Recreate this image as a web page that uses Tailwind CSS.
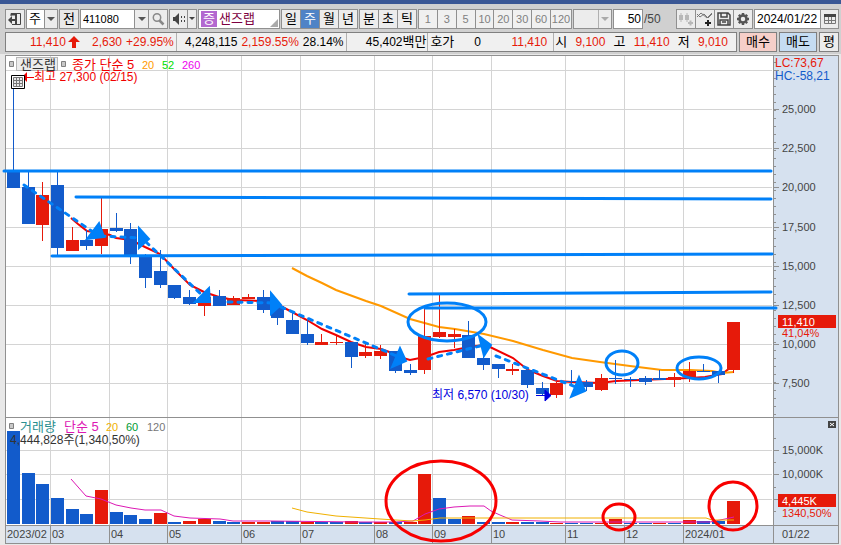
<!DOCTYPE html>
<html lang="ko">

<head>
    <meta charset="UTF-8">
    <meta name="viewport" content="width=device-width, initial-scale=1.0">
    <title>샌즈랩 주봉 차트</title>
    <script src="https://cdn.jsdelivr.net/npm/@tailwindcss/browser@4"></script>
</head>
<body class="bg-[#e8e8e8] text-black text-[13px] leading-4 font-['Liberation_Sans','Noto_Sans_CJK_KR',sans-serif]">

    <!-- Toolbar -->
    <header class="border-t-4 border-[#3a5795] bg-[#d0d0d0] pt-[5px] pb-0.5 pl-[5px] pr-0.5 whitespace-nowrap">
        <div class="flex h-5 gap-px">
            <button class="w-5 shrink-0 border border-[#909090] bg-[#ececec] flex items-center justify-center" aria-label="패널">
                <svg class="w-3.5 h-3.5" viewBox="0 0 14 14"><path d="M3 4V1.500h9.500v11H4" fill="none" stroke="#444" /><path d="M3 2.500h6M8 2v10" stroke="#444" stroke-width="2" /><path d="M0 8l4-4v8z" fill="#444" /><path d="M4 8h3" stroke="#444" stroke-width="2" /></svg>
            </button>
            <div class="flex w-8 shrink-0 border border-[#909090] bg-white">
                <select class="w-[17px] appearance-none pl-0.5" aria-label="구분"><option>주</option></select>
                <span class="flex-1 border-l border-[#909090] bg-[#ececec] flex items-center justify-center"><svg class="w-2 h-1.5" viewBox="0 0 8 6"><path d="M0 1h8L4 5z" fill="#555" /></svg></span>
            </div>
            <button class="w-5 shrink-0 border border-[#909090] bg-[#e8e8e8]">전</button>
            <div class="flex w-[88px] shrink-0 border border-[#909090] bg-white">
                <input class="w-[53px] pl-0.5 text-[11px]" value="411080" aria-label="종목코드">
                <button class="w-3.5 border-l border-[#909090] bg-[#ececec] flex items-center justify-center" aria-label="종목 목록"><svg class="w-2 h-1.5" viewBox="0 0 8 6"><path d="M0 1h8L4 5z" fill="#555" /></svg></button>
                <button class="flex-1 border-l border-[#909090] bg-[#ececec] flex items-center justify-center" aria-label="검색"><svg class="w-3.5 h-3.5" viewBox="0 0 14 14" fill="none" stroke="#888"><circle cx="6" cy="5.5" r="3.7" stroke-width="1.5" /><path d="M8.500 8.500l4 4" stroke-width="2.500" /></svg></button>
            </div>
            <div class="flex w-7 shrink-0 border border-[#909090] bg-[#ececec]">
                <button class="w-[17px] flex items-center justify-center" aria-label="음성"><svg class="w-3.5 h-3.5" viewBox="0 0 14 14" fill="#444"><path d="M1 5h2l4-4v12l-4-4H1z" /><path d="M9 4h1v2H9zM12 4h1v2h-1zM9 8h1v2H9zM12 8h1v2h-1z" /></svg></button>
                <button class="flex-1 border-l border-[#909090] flex items-center justify-center" aria-label="음성 메뉴"><svg class="w-1.5 h-1" viewBox="0 0 6 4"><path d="M0 0h6L3 3z" fill="#444" /></svg></button>
            </div>
            <div class="relative flex items-center w-[82px] shrink-0 border border-[#909090] bg-white pl-0.5 gap-0.5">
                <span class="bg-[#b368d0] text-white w-4 h-4 flex items-center justify-center">증</span>
                <span class="text-[#7d0040]">샌즈랩</span>
                <svg class="absolute right-px bottom-px w-2 h-2" viewBox="0 0 8 8"><path d="M8 0v8H0z" fill="#aaa" /></svg>
            </div>
            <div class="flex w-[77px] shrink-0 border border-[#909090] divide-x divide-[#909090] bg-[#ececec]">
                <button class="flex-1">일</button>
                <button class="flex-1 bg-[#4f83c6] text-white">주</button>
                <button class="flex-1">월</button>
                <button class="flex-1">년</button>
            </div>
            <div class="flex w-[58px] shrink-0 border border-[#909090] divide-x divide-[#909090] bg-[#ececec]">
                <button class="flex-1">분</button>
                <button class="flex-1">초</button>
                <button class="flex-1">틱</button>
            </div>
            <div class="flex w-[154px] shrink-0 border border-[#909090] divide-x divide-[#909090] bg-[#f0f0f0] text-[#808080] text-[11px]">
                <button class="flex-1">1</button>
                <button class="flex-1">3</button>
                <button class="flex-1">5</button>
                <button class="flex-1">10</button>
                <button class="flex-1">20</button>
                <button class="flex-1">30</button>
                <button class="flex-1">60</button>
                <button class="w-5">120</button>
            </div>
            <div class="flex w-[39px] shrink-0 border border-[#909090] bg-[#ececec]">
                <select class="w-6 appearance-none" aria-label="주기" disabled><option></option></select>
                <span class="flex-1 border-l border-[#b0b0b0] flex items-center justify-center"><svg class="w-2 h-1.5" viewBox="0 0 8 6"><path d="M0 1h8L4 5z" fill="#aaa" /></svg></span>
            </div>
            <input class="w-[30px] shrink-0 border border-[#909090] bg-white text-right text-xs pr-px" value="50" aria-label="봉 개수">
            <span class="text-[#444] text-xs self-center">/50</span>
            <div class="flex ml-auto w-[77px] shrink-0 border border-[#909090] divide-x divide-[#909090] bg-[#ececec]">
                <button class="flex-1 flex items-center justify-center" aria-label="종목 추가"><svg class="w-4 h-4" viewBox="0 0 16 16" fill="#b8b8b8"><path d="M1 4h4v5H1zM2.500 2h1v9h-1zM7 4h4v5H7zM8.500 2h1v9h-1zM10 11h5v2h-5zM11.500 9.500h2v5h-2z" /></svg></button>
                <button class="flex-1 flex items-center justify-center" aria-label="지표 추가"><svg class="w-4 h-4" viewBox="0 0 16 16" fill="none" stroke="#777"><path d="M0 6l4-4 6 5 5-5M0 3l3 3 4-3 4 4 4-4" /><path d="M8 12h6M11 9v6" stroke="#222" stroke-width="2" /></svg></button>
                <button class="flex-1 flex items-center justify-center" aria-label="저장"><svg class="w-4 h-4" viewBox="0 0 16 16" fill="none" stroke="#444" stroke-width="1.500"><path d="M2 2h10l2 2v10H2zM5 2v4h6V2M4 14V9h8v5M6 11h4" /></svg></button>
                <button class="flex-1 flex items-center justify-center" aria-label="설정"><svg class="w-3.5 h-3.5" viewBox="0 0 14 14" fill="none" stroke="#555"><circle cx="7" cy="7" r="3.500" stroke-width="2.500" /><path d="M7 1v2M7 11v2M1 7h2M11 7h2M2.800 2.800l1.400 1.400M9.800 9.800l1.400 1.400M2.800 11.200l1.400-1.400M9.800 4.200l1.400-1.400" stroke-width="2.500" /></svg></button>
            </div>
            <div class="flex w-[85px] shrink-0 border border-[#909090] bg-white">
                <input class="w-[65px] pl-0.5 text-xs" value="2024/01/22" aria-label="날짜">
                <button class="flex-1 border-l border-[#909090] bg-[#ececec] flex items-center justify-center" aria-label="달력"><svg class="w-3 h-3" viewBox="0 0 12 12"><path d="M.5 2.500h11v8H.5zM4.500 3v8M7.500 3v8M1 7.500h10" fill="none" stroke="#777" /><path d="M0 1h12v3H0z" fill="#444" /></svg></button>
            </div>
        </div>

        <!-- Quote -->
        <div class="flex h-5 mt-[3px] gap-0.5">
            <div class="flex-1 grid grid-cols-[171fr_170fr_82fr_126fr_182fr] border border-[#808080] bg-[#f0f0f0] divide-x divide-[#b0b0b0] text-xs">
                <div class="flex items-center text-[#e61a0a] pl-6 pr-0.5">
                    <span>11,410</span>
                    <svg class="w-3 h-3 ml-0.5" viewBox="0 0 12 12"><path d="M6 0l6 6H8v6H4V6H0z" fill="#e61a0a" /></svg>
                    <span class="ml-auto">2,630</span>
                    <span class="ml-1">+29.95%</span>
                </div>
                <div class="flex items-center justify-end gap-1 pr-0.5">
                    <span>4,248,115</span>
                    <span class="text-[#e61a0a]">2,159.55%</span>
                    <span>28.14%</span>
                </div>
                <div class="flex items-center justify-end pr-px">45,402<span class="text-[13px]">백만</span></div>
                <div class="flex items-center pl-0.5 pr-1.5">
                    <span class="text-[13px]">호가</span>
                    <span class="ml-5">0</span>
                    <span class="text-[#e61a0a] ml-auto">11,410</span>
                </div>
                <div class="flex items-center justify-between pl-px pr-2">
                    <span class="text-[13px]">시</span><span class="text-[#e61a0a]">9,100</span>
                    <span class="text-[13px]">고</span><span class="text-[#e61a0a]">11,410</span>
                    <span class="text-[13px]">저</span><span class="text-[#e61a0a]">9,010</span>
                </div>
            </div>
            <button class="w-[38px] border border-[#808080] bg-[#f6cfc9]">매수</button>
            <button class="w-[38px] border border-[#808080] bg-[#c5dcf2]">매도</button>
            <button class="w-5 border border-[#808080] bg-[#ececec]">평</button>
        </div>
    </header>

    <!-- Chart -->
    <main class="pl-[5px] pr-0.5 pt-px">
        <svg class="block w-full h-auto overflow-visible text-[11px]" viewBox="5 55 834 489">
            <rect x="5.500" y="55.500" width="833" height="488" fill="#fff" stroke="#909090" />
            <rect x="774" y="56" width="64" height="469" fill="#d6e1ef" />
            <rect x="6" y="526" width="832" height="17" fill="#d6e1ef" />
            <g id="grid" stroke="#d4d4d4"></g>
            <g id="axis" stroke="#909090"><path d="M773.500 56V543M6 417.500H838M6 525.500H838" /></g>
            <g id="labels" fill="#444"></g>

            <!-- price pane -->
            <path d="M71 218L78 224L87 231L101 233L110 235L116 238L131 240L145 247L160 254L175 270L190 285L204 292L219 297L234 300L263 301L277 304L292 312L307 320L322 329L336 335L351 342L366 347L381 349L395 354L403 358L410 360L425 357L439 352L454 350L469 347L484 345L490 347L513 358L528 370L543 376L557 381L572 382L600 383L616 381L640 380L690 378L705 377L722 374L730 368L736 366" fill="none" stroke="#f00000" stroke-width="2" />
            <path d="M292 268L307 276L322 283L336 290L366 301L381 306L410 319L439 327L455 329L484 334L513 341L543 350L572 358L600 362L630 366L662 370L690 370L712 371L722 373L734 372" fill="none" stroke="#ff9900" stroke-width="2" />
            <g id="candles"></g>

            <!-- volume pane -->
            <g id="volumes"></g>
            <path d="M71 479L86 496L101 499L116 505L131 508L145 510L161 510L174 516L190 518L220 519L233 521L270 521L360 522L395 522L413 521L425 514L439 509L454 507L470 506L484 506L491 511L500 515L512 520L540 521L560 522L710 522L725 519L734 517" fill="none" stroke="#dd18b4" />
            <path d="M292 508L307 512L336 516L380 519L412 521L425 520L440 518L706 518L712 520L734 520" fill="none" stroke="#f0b000" />

            <!-- legends -->
            <g fill="#c8c8c8" stroke="#808080">
                <path d="M9.500 61.500h4v5h-4zM61.500 61.500h4v5h-4zM9.500 423.500h4v5h-4z" />
                <rect x="16.500" y="57.500" width="41" height="13" fill="#ececec" stroke="#b8b8b8" />
            </g>
            <g class="text-[13px]">
                <text x="20" y="69" fill="#333">샌즈랩</text>
                <text x="72" y="69" fill="#f00000">종가 단순 5</text>
                <text x="20" y="431" fill="#2a9090">거래량</text>
                <text x="64" y="431" fill="#dd18b4">단순 5</text>
            </g>
            <text x="142" y="69" fill="#ff9900">20</text>
            <text x="162" y="69" fill="#00e000">52</text>
            <text x="182" y="69" fill="#ee00ee">260</text>
            <text x="106" y="431" fill="#f0b000">20</text>
            <text x="126" y="431" fill="#009933">60</text>
            <text x="147" y="431" fill="#777">120</text>
            <path d="M22 77.500h12" stroke="#f00000" />
            <path d="M22 77l5-5v10z" fill="#f00000" />
            <path d="M11.500 75.500h13v13h-13z" fill="#fff" stroke="#000" />
            <path d="M13.500 77.500h9v9h-9zM16.500 77v10M19.500 77v10M13 80.500h10M13 83.500h10" fill="#e8e8e8" stroke="#777" />
            <path d="M536 395.500h10M545 390l6 5.500-6 5.500z" fill="#0000e0" stroke="#0000e0" />
            <g class="text-xs">
                <text x="34" y="81" fill="#f00000">최고 27,300 (02/15)</text>
                <text x="432" y="399" fill="#0000e0">최저 6,570 (10/30)</text>
                <text x="10" y="444" fill="#333">4,444,828주(1,340,50%)</text>
                <text x="775" y="67" fill="#e61a0a">LC:73,67</text>
                <text x="775" y="80" fill="#125bcb">HC:-58,21</text>
            </g>

            <!-- current values on the right axis -->
            <rect x="778" y="315" width="58" height="13" fill="#e61a0a" />
            <text x="782" y="326" fill="#fff">11,410</text>
            <text x="782" y="337" fill="#e61a0a">41,04%</text>
            <rect x="778" y="494" width="58" height="13" fill="#e61a0a" />
            <text x="782" y="505" fill="#fff">4,445K</text>
            <text x="782" y="517" fill="#e61a0a">1340,50%</text>
            <rect x="828" y="421" width="8" height="7" fill="#444" />
            <path d="M830 423l4 3M834 423l-4 3" stroke="#fff" />

            <!-- drawn lines -->
            <g fill="none" stroke="#0080f8" stroke-width="3" stroke-linecap="round">
                <path d="M4 171H771M76 197L771 199M52 256L772 254M409 294L771 292M425 308H776" />
                <path d="M24 185L96 234M101 236L142 238M146 242L204 297M228 302L275 303M281 307L399 357M428 359L480 346M496 356L576 387" stroke-dasharray="4 6" />
                <ellipse cx="447" cy="322" rx="39" ry="19" />
                <ellipse cx="622" cy="363" rx="16" ry="12" />
                <ellipse cx="699" cy="368" rx="22" ry="11" />
            </g>
            <path d="M99 223L87 239L104 237zM139 228L149 239L139 248zM209 288L195 302L210 302zM271 293L281 305L271 314zM400 348L406 361L392 367zM479 336L491 345L484 356zM579 377L585 391L571 397z" fill="#0080f8" stroke="#0080f8" stroke-width="2" />
            <g fill="none" stroke="#f80000" stroke-width="3">
                <ellipse cx="441" cy="501" rx="55" ry="40" />
                <ellipse cx="619" cy="517" rx="16" ry="13" />
                <ellipse cx="733" cy="506" rx="24" ry="24" />
            </g>
        </svg>
    </main>

    <script>
        const RED = '#e61a0a', BLUE = '#125bcb';

        // color, high, body top, body bottom, low
        const candles = [
            ['b', 75, 172, 188, 188], ['b', 171, 187, 224, 224], ['r', 182, 195, 225, 241], ['b', 171, 185, 248, 255], ['r', 227, 240, 251, 251],
            ['b', 230, 240, 246, 250], ['r', 198, 229, 246, 254], ['b', 213, 228, 231, 232], ['b', 223, 229, 256, 264], ['b', 254, 256, 278, 288],
            ['b', 250, 271, 285, 288], ['b', 285, 285, 298, 299], ['b', 290, 297, 304, 305], ['r', 297, 297, 306, 316], ['b', 290, 296, 306, 306],
            ['r', 296, 298, 305, 305], ['r', 294, 297, 299, 299], ['b', 290, 297, 310, 313], ['b', 306, 306, 318, 325], ['b', 312, 320, 334, 334],
            ['b', 320, 334, 343, 345], ['r', 334, 342, 345, 345], ['r', 336, 342, 343, 345], ['b', 342, 342, 357, 368], ['r', 344, 352, 356, 358],
            ['r', 345, 351, 356, 359], ['b', 351, 351, 371, 373], ['b', 364, 370, 373, 375], ['r', 308, 336, 370, 374], ['r', 295, 332, 337, 338],
            ['r', 329, 334, 337, 348], ['b', 321, 335, 358, 358], ['b', 355, 358, 365, 370], ['b', 364, 364, 369, 378], ['r', 364, 369, 371, 375],
            ['b', 370, 370, 385, 388], ['b', 382, 388, 394, 395], ['r', 382, 383, 395, 398], ['b', 370, 381, 382, 384], ['b', 380, 382, 387, 391],
            ['r', 374, 378, 390, 391], ['b', 360, 378, 379, 384], ['b', 377, 379, 380, 387], ['b', 376, 378, 382, 385], ['b', 370, 378, 380, 380],
            ['r', 373, 377, 380, 387], ['r', 362, 371, 377, 382], ['b', 364, 371, 372, 372], ['b', 371, 371, 375, 383], ['r', 322, 322, 370, 373]
        ];
        const volumeTops = [431, 473, 484, 498, 509, 514, 490, 512, 515, 519, 513, 522, 521, 519, 521, 522, 522, 522, 521, 521, 522, 522, 522, 521, 522,
            522, 522, 522, 474, 498, 519, 516, 522, 522, 522, 522, 522, 523, 523, 523, 523, 519, 523, 523, 523, 523, 520, 521, 521, 501];
        const volumeColors = 'bbbbbbrbbbrbrrbbrrbbrbbrbrbrrbbrbbrbbrbbrrbbrbrbbr';

        let bodies = '', bars = '';
        candles.forEach(([c, high, top, bottom, low], i) => {
            const x = Math.round(6.9 + i * 14.69);
            const color = c === 'r' ? RED : BLUE;
            bodies += `<rect x="${x + 6}" y="${high}" width="1" height="${low - high}" fill="${color}"/>`;
            bodies += `<rect x="${x}" y="${top}" width="13" height="${bottom - top}" fill="${color}"/>`;
            bars += `<rect x="${x}" y="${volumeTops[i]}" width="13" height="${524 - volumeTops[i]}" fill="${volumeColors[i] === 'r' ? RED : BLUE}"/>`;
        });
        document.getElementById('candles').innerHTML = bodies;
        document.getElementById('volumes').innerHTML = bars;

        // grid, ticks and labels
        const months = [[50, '03'], [109, '04'], [167, '05'], [241, '06'], [300, '07'], [374, '08'], [432, '09'], [491, '10'], [565, '11'], [624, '12'], [683, '2024/01']];
        const prices = [[70, ''], [109, '25,000'], [148, '22,500'], [187, '20,000'], [227, '17,500'], [266, '15,000'], [305, '12,500'], [344, '10,000'], [383, '7,500']];
        const amounts = [[450, '15,000K'], [474, '10,000K'], [499, '']];
        let grid = '', ticks = '', labels = '<text x="7" y="538">2023/02</text><text x="782" y="538">01/22</text>';
        months.forEach(([x, name]) => {
            grid += `<path d="M${x + .5} 56V525"/>`;
            ticks += `<path d="M${x + .5} 526V543"/>`;
            labels += `<text x="${x + 2}" y="538">${name}</text>`;
        });
        [...prices, ...amounts].forEach(([y, name]) => {
            grid += `<path d="M6 ${y + .5}H772"/>`;
            ticks += `<path d="M774 ${y + .5}h5"/>`;
            labels += `<text x="782" y="${y + 4}">${name}</text>`;
        });
        for (let y = 62; y < 415; y += 8) ticks += `<path d="M774 ${y + .5}h2"/>`;
        [438, 462, 487, 511].forEach(y => ticks += `<path d="M774 ${y + .5}h2"/>`);
        document.getElementById('grid').innerHTML = grid;
        document.getElementById('axis').innerHTML += ticks;
        document.getElementById('labels').innerHTML = labels;
    </script>
</body>
</html>
